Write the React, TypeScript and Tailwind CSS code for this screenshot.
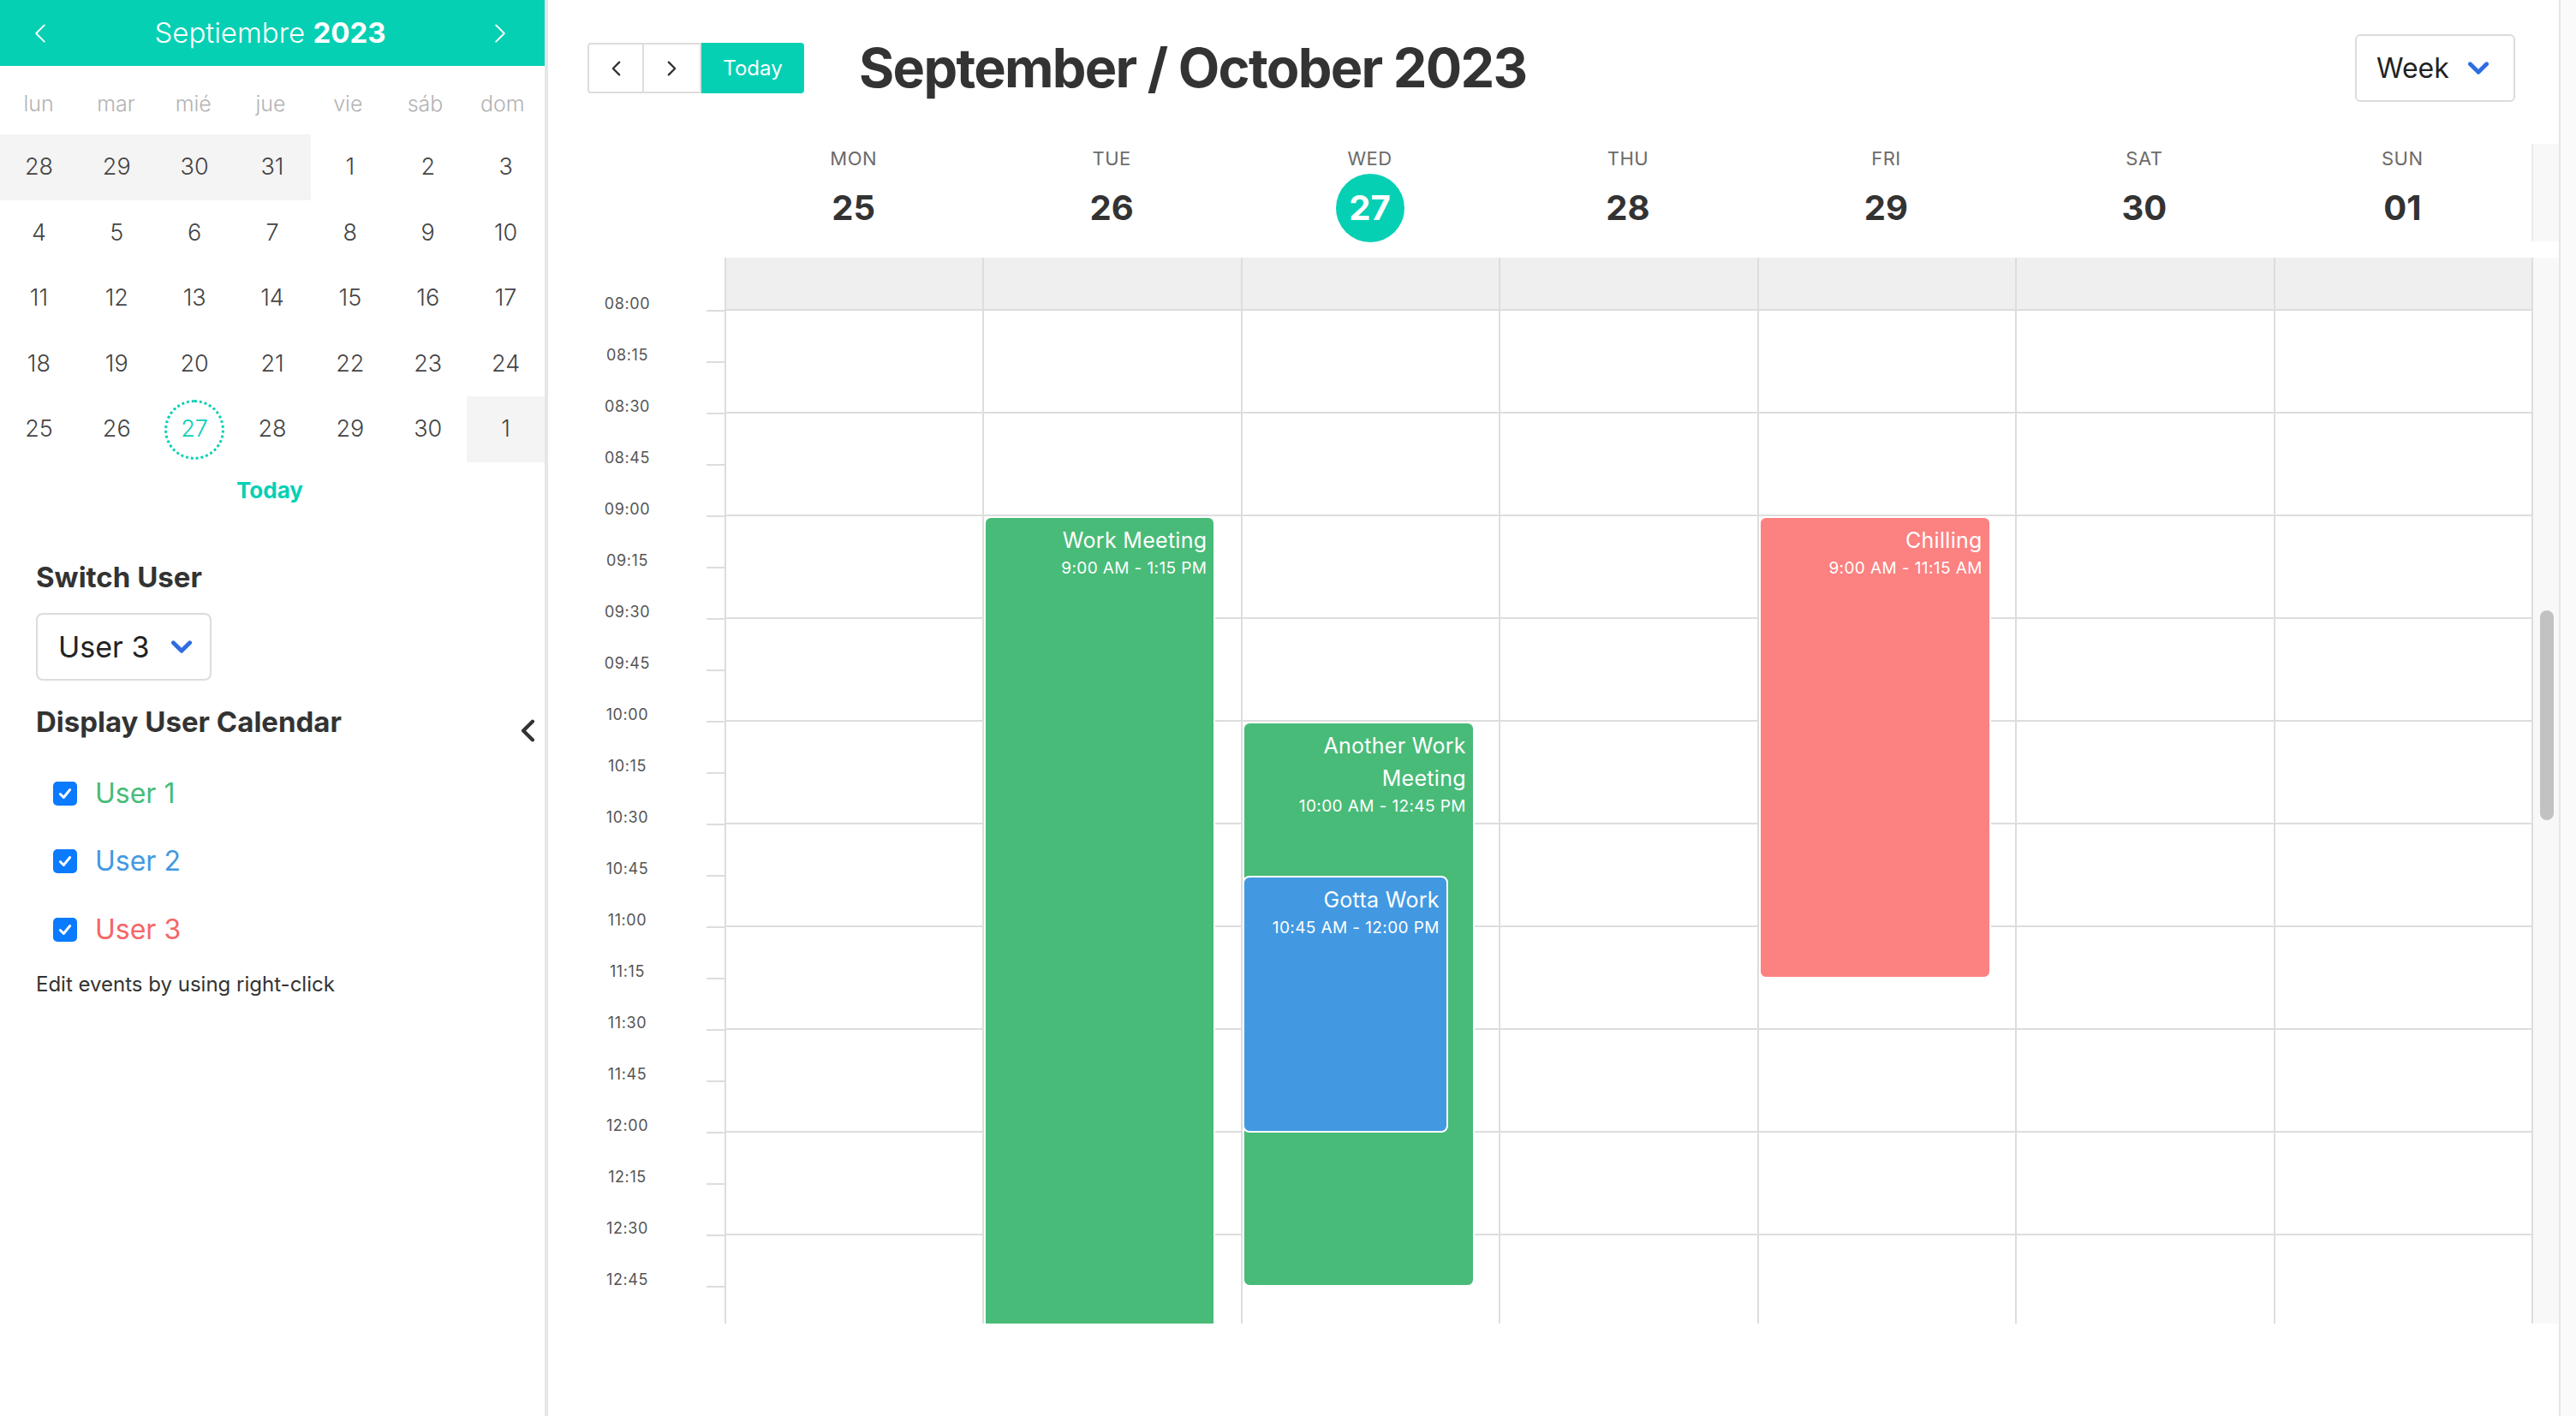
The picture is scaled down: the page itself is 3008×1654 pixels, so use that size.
import React from 'react';

const TEAL = 'bg-[#06d0b4]';

const miniWeeks: number[][] = [
  [28, 29, 30, 31, 1, 2, 3],
  [4, 5, 6, 7, 8, 9, 10],
  [11, 12, 13, 14, 15, 16, 17],
  [18, 19, 20, 21, 22, 23, 24],
  [25, 26, 27, 28, 29, 30, 1],
];

const weekdays = ['lun', 'mar', 'mié', 'jue', 'vie', 'sáb', 'dom'];

const days = [
  { name: 'MON', num: '25' },
  { name: 'TUE', num: '26' },
  { name: 'WED', num: '27', today: true },
  { name: 'THU', num: '28' },
  { name: 'FRI', num: '29' },
  { name: 'SAT', num: '30' },
  { name: 'SUN', num: '01' },
];

const slotLabels = [
  '08:15', '08:30', '08:45', '09:00', '09:15', '09:30', '09:45', '10:00', '10:15', '10:30',
  '10:45', '11:00', '11:15', '11:30', '11:45', '12:00', '12:15', '12:30', '12:45', '', '',
];

type Ev = { day: number; title: string; time: string; start: number; end: number; color: string; width: number };

const events: Ev[] = [
  { day: 1, title: 'Work Meeting', time: '9:00 AM - 1:15 PM', start: 9, end: 13.25, color: 'bg-[#48bb78]', width: 270 },
  { day: 2, title: 'Another Work Meeting', time: '10:00 AM - 12:45 PM', start: 10, end: 12.75, color: 'bg-[#48bb78]', width: 271 },
  { day: 2, title: 'Gotta Work', time: '10:45 AM - 12:00 PM', start: 10.75, end: 12, color: 'bg-[#4299e1]', width: 240 },
  { day: 4, title: 'Chilling', time: '9:00 AM - 11:15 AM', start: 9, end: 11.25, color: 'bg-[#fc8181]', width: 271 },
];

// 08:00 sits 62px below the top of the scroll body, 240px per hour
const yOf = (h: number) => 62 + (h - 8) * 240;

function Chevron({ dir, className, width = 2 }: { dir: 'left' | 'right' | 'down'; className?: string; width?: number }) {
  const pts = dir === 'left' ? '10,2 2,10 10,18' : dir === 'right' ? '2,2 10,10 2,18' : '2,2 10,10 18,2';
  const vb = dir === 'down' ? '0 0 20 12' : '0 0 12 20';
  return (
    <svg viewBox={vb} className={className} fill="none" stroke="currentColor" strokeWidth={width} strokeLinecap="round" strokeLinejoin="round">
      <polyline points={pts} />
    </svg>
  );
}

function MiniCalendar() {
  return (
    <div>
      <div className={`h-[77px] ${TEAL} flex items-center justify-between pl-[39px] pr-[44px] text-white`}>
        <Chevron dir="left" className="w-[16px] h-[24px]" width={1.6} />
        <div className="text-[33px] font-light">
          Septiembre <span className="font-bold">2023</span>
        </div>
        <Chevron dir="right" className="w-[16px] h-[24px]" width={1.6} />
      </div>
      <div className="grid grid-cols-7 h-[80px] items-center pt-[10px] pr-[4px]">
        {weekdays.map((d) => (
          <div key={d} className="text-center text-[25px] font-light text-[#b3b3b3]">{d}</div>
        ))}
      </div>
      {miniWeeks.map((row, ri) => (
        <div key={ri} className="grid grid-cols-7 h-[76.6px]">
          {row.map((n, ci) => {
            const other = (ri === 0 && ci < 4) || (ri === 4 && ci === 6);
            const isToday = ri === 4 && ci === 2;
            return (
              <div key={ci} className={`flex items-center justify-center text-[27px] font-light ${other ? 'bg-[#f4f4f4]' : ''}`}>
                {isToday ? (
                  <div className="w-[70px] h-[70px] rounded-full border-[3px] border-dotted border-[#06d0b4] flex items-center justify-center text-[#06d0b4]">
                    {n}
                  </div>
                ) : (
                  <span className="text-[#444]">{n}</span>
                )}
              </div>
            );
          })}
        </div>
      ))}
      <div className="mt-[18px] h-[30px] leading-[30px] text-center text-[26px] font-bold text-[#06d0b4] pr-[6px]">Today</div>
    </div>
  );
}

function Sidebar() {
  const users = [
    { name: 'User 1', color: 'text-[#48bb78]' },
    { name: 'User 2', color: 'text-[#4299e1]' },
    { name: 'User 3', color: 'text-[#f56565]' },
  ];
  return (
    <aside className="w-[640px] shrink-0 border-r-4 border-[#e6e6e6] flex flex-col">
      <MiniCalendar />
      <div className="pl-[42px] mt-[66px] h-[40px] leading-[40px] text-[33px] font-bold text-[#333]">Switch User</div>
      <div className="ml-[42px] mt-[22px] w-[205px] h-[79px] border-2 border-[#dcdcdc] rounded-[8px] flex items-center pl-[24px] gap-[26px]">
        <span className="text-[34px] text-[#222]">User 3</span>
        <Chevron dir="down" className="w-[24px] h-[15px] text-[#2f6de1]" width={4} />
      </div>
      <div className="mt-[29px] pl-[42px] pr-[11px] h-[40px] flex items-center justify-between">
        <span className="text-[33px] font-bold text-[#333]">Display User Calendar</span>
        <Chevron dir="left" className="w-[17px] h-[27px] mt-[20px] text-[#333]" width={3.2} />
      </div>
      <div className="mt-[23px]">
        {users.map((u) => (
          <div key={u.name} className="h-[79.5px] flex items-center pl-[62px] gap-[21px]">
            <div className="w-[28px] h-[28px] rounded-[5px] bg-[#0a7aff] flex items-center justify-center">
              <svg viewBox="0 0 16 16" className="w-[18px] h-[18px]" fill="none" stroke="white" strokeWidth={2.6} strokeLinecap="round" strokeLinejoin="round">
                <polyline points="3,8.5 6.5,12 13,4" />
              </svg>
            </div>
            <span className={`text-[32px] ${u.color}`}>{u.name}</span>
          </div>
        ))}
      </div>
      <div className="mt-[10px] pl-[42px] h-[30px] leading-[30px] text-[24px] text-[#333]">Edit events by using right-click</div>
    </aside>
  );
}

function Toolbar() {
  return (
    <div className="mt-[40px] h-[79px] flex items-center pl-[46px] pr-[51px]">
      <div className="flex h-[59px]">
        <button className="w-[66px] h-full border-2 border-[#dddddd] rounded-l-[4px] flex items-center justify-center text-[#333]">
          <Chevron dir="left" className="w-[11px] h-[20px]" width={2.6} />
        </button>
        <button className="w-[67px] h-full border-2 border-l-0 border-[#dddddd] flex items-center justify-center text-[#333]">
          <Chevron dir="right" className="w-[11px] h-[20px]" width={2.6} />
        </button>
        <button className={`w-[120px] h-full ${TEAL} rounded-r-[4px] text-white text-[24px]`}>Today</button>
      </div>
      <h1 className="ml-[64px] text-[63px] font-bold text-[#333] tracking-[-1.7px]">September / October 2023</h1>
      <div className="ml-auto w-[187px] h-[79px] border-2 border-[#dcdcdc] rounded-[6px] flex items-center pl-[23px] gap-[22px]">
        <span className="text-[32px] text-[#222]">Week</span>
        <Chevron dir="down" className="w-[24px] h-[15px] text-[#2f6de1]" width={4} />
      </div>
    </div>
  );
}

function DayHeader() {
  return (
    <div className="h-[182px] flex">
      <div className="w-[206px] shrink-0" />
      <div className="flex-1 grid grid-cols-7">
        {days.map((d) => (
          <div key={d.name} className="flex flex-col items-center pt-[52px]">
            <div className="h-[28px] leading-[28px] text-[22px] text-[#6b6b6b] tracking-[0.5px]">{d.name}</div>
            <div
              className={`mt-[4px] w-[80px] h-[80px] rounded-full flex items-center justify-center text-[40px] font-bold ${
                d.today ? 'bg-[#06d0b4] text-white' : 'text-[#333]'
              }`}
            >
              {d.num}
            </div>
          </div>
        ))}
      </div>
      <div className="w-[32px] shrink-0 mt-[49px] h-[114px] bg-[#f8f8f8] border-l-2 border-[#ececec]" />
    </div>
  );
}

function EventBox({ ev }: { ev: Ev }) {
  return (
    <div
      className={`absolute left-0 ${ev.color} border-2 border-white rounded-[8px] text-white text-right pt-[7px] pr-[8px] pl-[8px] overflow-hidden`}
      style={{ top: yOf(ev.start), height: yOf(ev.end) - yOf(ev.start), width: ev.width }}
    >
      <div className="text-[25px] leading-[38px] tracking-[0.3px]">{ev.title}</div>
      <div className="text-[19px] leading-[28px] tracking-[0.4px]">{ev.time}</div>
    </div>
  );
}

function TimeGrid() {
  return (
    <div className="h-[1245px] overflow-hidden flex">
      <div className="w-[206px] shrink-0 flex flex-col">
        <div className="h-[63px] shrink-0 flex border-t-2 border-transparent">
          <div className="flex-1 flex items-end justify-center text-[18px] leading-[18px] text-[#555] tracking-[0.6px]">08:00</div>
          <div className="w-[21px] border-b-2 border-[#dddddd]" />
        </div>
        {slotLabels.map((t, i) => (
          <div key={i} className="h-[60px] shrink-0 flex">
            <div className="flex-1 flex items-end justify-center text-[18px] leading-[18px] text-[#555] tracking-[0.6px]">{t}</div>
            <div className="w-[21px] border-b-2 border-[#dddddd]" />
          </div>
        ))}
      </div>
      <div className="flex-1 grid grid-cols-7">
        {days.map((d, di) => (
          <div key={d.name} className="relative border-l-2 border-[#dddddd] flex flex-col">
            <div className="h-[62px] shrink-0 bg-[#efefef] border-b-2 border-[#dddddd]" />
            {Array.from({ length: 10 }).map((_, i) => (
              <div key={i} className="h-[120px] shrink-0 border-b-2 border-[#dddddd]" />
            ))}
            {events
              .filter((e) => e.day === di)
              .map((e) => (
                <EventBox key={e.title} ev={e} />
              ))}
          </div>
        ))}
      </div>
      <div className="w-[32px] shrink-0 bg-[#f8f8f8] border-l-2 border-[#dddddd] pt-[412px] pl-[8px]">
        <div className="w-[16px] h-[245px] rounded-full bg-[#c2c2c2]" />
      </div>
    </div>
  );
}

export default function App() {
  return (
    <div className="w-[3008px] h-[1654px] flex bg-white overflow-hidden font-['Inter','Liberation_Sans',sans-serif]">
      <Sidebar />
      <main className="flex-1 min-w-0 flex flex-col">
        <Toolbar />
        <DayHeader />
        <TimeGrid />
      </main>
      <div className="w-[20px] shrink-0 bg-[#fafafa] border-l-2 border-[#e6e6e6]" />
    </div>
  );
}
